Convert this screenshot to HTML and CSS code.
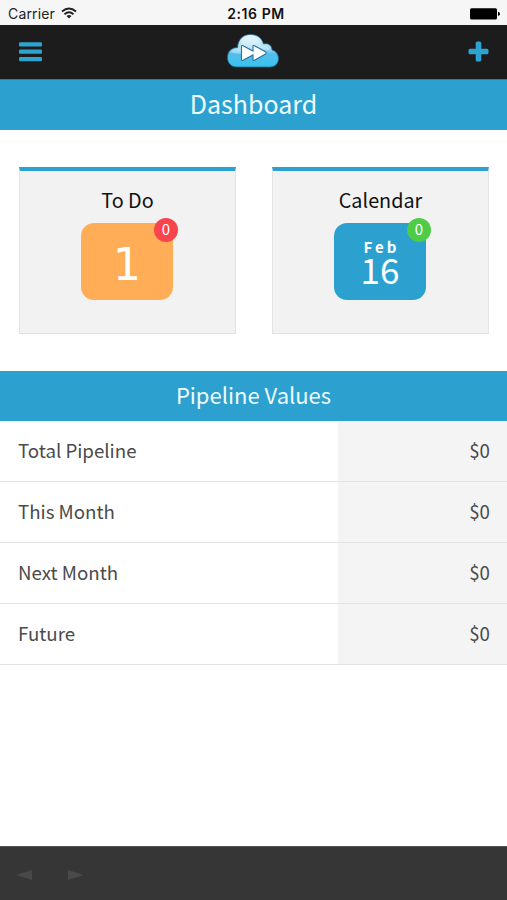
FILE: index.html
```
<!DOCTYPE html>
<html lang="en">
<head>
<meta charset="utf-8">
<title>Dashboard</title>
<link rel="stylesheet" href="styles.css">
</head>
<body>
<div class="status">
  <div class="carrier"><span>Carrier</span>
    <svg class="wifi" viewBox="0 0 16 12" width="16" height="12"><g fill="none" stroke="#222" stroke-width="1.9"><path d="M1 4.5Q8-1.6 15 4.5"/><path d="M3.5 7.3Q8 3.4 12.5 7.3"/></g><path d="M5.5 9Q8 7 10.5 9L8 11.6z" fill="#222"/></svg>
  </div>
  <div class="time">2:16 PM</div>
  <svg class="battery" viewBox="0 0 30 12" width="30" height="12"><rect x="0" y="0.2" width="27" height="11.4" rx="1.5"/><path d="M28 3.8q2 .5 2 2.1t-2 2.1z"/></svg>
</div>
<header class="nav">
  <svg class="menu" viewBox="0 0 23 20" width="23" height="20" fill="#2fa3d0"><rect width="23" height="4.2" rx="1.2" y="0.2"/><rect y="7.6" width="23" height="4.2" rx="1.2"/><rect y="15" width="23" height="4.2" rx="1.2"/></svg>
  <svg class="cloud" viewBox="0 0 54 36" width="54" height="36">
    <defs><linearGradient id="sky" x1="0" y1="0" x2="0" y2="1"><stop offset="0" stop-color="#eef9fe"/><stop offset=".45" stop-color="#9bd8f3"/><stop offset=".6" stop-color="#55bde9"/><stop offset="1" stop-color="#35c4f2"/></linearGradient></defs>
    <path d="M11 34C5 34 1.500 30 1.500 24.500C1.500 18 6 14.500 11.500 14.500C12 6 17.500 1.500 24.500 1.500C31.500 1.500 36 5.500 37.500 11C43 9.500 46 13 46 17C50 18 52.500 21.500 52.500 25.500C52.500 30.500 49 34 43.500 34Z" fill="url(#sky)" stroke="#1c668c" stroke-width="0.8"/>
    <path d="M5 19C8 15 13 16 14 15C15 7 19 4 25 4C31 4 34 8 35 13C40 12 43 14 43 17C32 15 22 25 5 19Z" fill="#fff" opacity=".3"/>
    <path d="M15.500 13.500Q15.500 12 17 12.700L27 18V13.500Q27 12 28.500 12.700L39.500 18.700Q41 20 39.500 21L28.500 27.300Q27 28 27 26.500V22L17 27.300Q15.500 28 15.500 26.500Z" fill="#fff" stroke="#267299" stroke-width="1.100"/>
  </svg>
  <svg class="plus" viewBox="0 0 21 21" width="21" height="21"><path d="M9.200 0.500h2.600q1.500 0 1.500 1.500v5.700h5.700q1.500 0 1.500 1.500v2.600q0 1.500-1.500 1.500h-5.700v5.700q0 1.500-1.500 1.500h-2.600q-1.500 0-1.500-1.500v-5.700h-5.700q-1.500 0-1.500-1.500v-2.600q0-1.500 1.500-1.500h5.700v-5.700q0-1.500 1.500-1.500z" fill="#2fa3d0"/></svg>
</header>
<h1 class="title">Dashboard</h1>
<main>
  <section class="cards">
    <div class="card"><h2>To Do</h2><div class="tile orange"><span class="one">1</span><span class="badge red">0</span></div></div>
    <div class="card"><h2>Calendar</h2><div class="tile blue"><span class="month">Feb</span><span class="day">16</span><span class="badge green">0</span></div></div>
  </section>
  <h2 class="subtitle">Pipeline Values</h2>
  <div class="rows">
    <div class="row"><span class="label">Total Pipeline</span><span class="value">$0</span></div>
    <div class="row"><span class="label">This Month</span><span class="value">$0</span></div>
    <div class="row"><span class="label">Next Month</span><span class="value">$0</span></div>
    <div class="row"><span class="label">Future</span><span class="value">$0</span></div>
  </div>
</main>
<footer class="toolbar">
  <svg viewBox="0 0 16 10" width="16" height="10"><path d="M16 0v10L0 5z" fill="#494949"/></svg>
  <svg viewBox="0 0 16 10" width="16" height="10"><path d="M0 0v10l16-5z" fill="#494949"/></svg>
</footer>
</body>
</html>
```
FILE: styles.css
```
* { box-sizing: border-box; }
body {
  margin: 0;
  height: 900px;
  display: flex;
  flex-direction: column;
  background: #fff;
  font-family: "Noto Sans CJK SC", "Noto Sans", sans-serif;
  overflow: hidden;
}
h1, h2 { margin: 0; font-weight: 400; }
svg { display: block; flex: none; }
.status {
  height: 25px;
  flex: none;
  display: grid;
  grid-template-columns: 1fr auto 1fr;
  align-items: center;
  padding: 2px 7px 0 8px;
  background: #f6f6f6;
  color: #222;
  font: 14px/20px Inter, sans-serif;
}
.carrier { display: flex; align-items: center; gap: 6px; letter-spacing: 0.15px; }
.wifi { margin-top: -2px; }
.time { font-weight: 600; color: #111; letter-spacing: 0.55px; margin-left: 4px; }
.battery { justify-self: end; }
.nav {
  height: 54px;
  flex: none;
  display: grid;
  grid-template-columns: 1fr auto 1fr;
  align-items: center;
  padding: 0 18px 0 19px;
  background: #1c1c1c;
}
.cloud { margin: -2px 2px 0 0; }
.plus { justify-self: end; margin-top: -2px; }
.title, .subtitle {
  flex: none;
  background: #2ca1cf;
  color: #f0fbff;
  text-align: center;
}
.title { height: 51px; font-size: 25px; line-height: 46px; border-top: 1px solid #257da0; }
.cards { display: flex; gap: 36px; padding: 37px 18px 37px 19px; }
.card {
  flex: 1;
  height: 167px;
  display: flex;
  flex-direction: column;
  align-items: center;
  background: #f2f2f2;
  border: 1px solid #e3e3e3;
  border-top: 4px solid #2ca1cf;
}
.card h2 { font-size: 19.8px; line-height: 30px; margin: 14px 0 8px; color: #111; }
.tile {
  position: relative;
  width: 92px;
  height: 77px;
  margin-right: 1px;
  border-radius: 13px;
  color: #fff;
  display: flex;
  flex-direction: column;
  align-items: center;
}
.orange { background: #ffae57; }
.blue { background: #2ca1cf; }
.one { font: 44px/84px "DejaVu Sans", sans-serif; }
.month { font-size: 15px; line-height: 18px; font-weight: 700; letter-spacing: 3px; margin: 15px -3px 0 0; }
.day { font-size: 35px; line-height: 25px; }
.badge {
  position: absolute;
  top: -5px;
  right: -5px;
  width: 24px;
  height: 24px;
  border-radius: 50%;
  text-align: center;
  font-size: 15px;
  line-height: 22px;
}
.red { background: #f8444d; }
.green { background: #4ecb47; }
.subtitle { height: 50px; font-size: 22px; line-height: 47px; }
.row {
  height: 61px;
  display: flex;
  border-bottom: 1px solid #e2e2e2;
  color: #4b4b4b;
  font-size: 18.7px;
  line-height: 58px;
}
.label { width: 338px; padding-left: 18px; }
.value { flex: 1; padding-right: 17px; text-align: right; background: #f4f4f4; }
.toolbar {
  margin-top: auto;
  height: 54px;
  flex: none;
  display: flex;
  gap: 36px;
  padding: 23px 16px;
  background: #363636;
  border-top: 1px solid #555;
}
```
